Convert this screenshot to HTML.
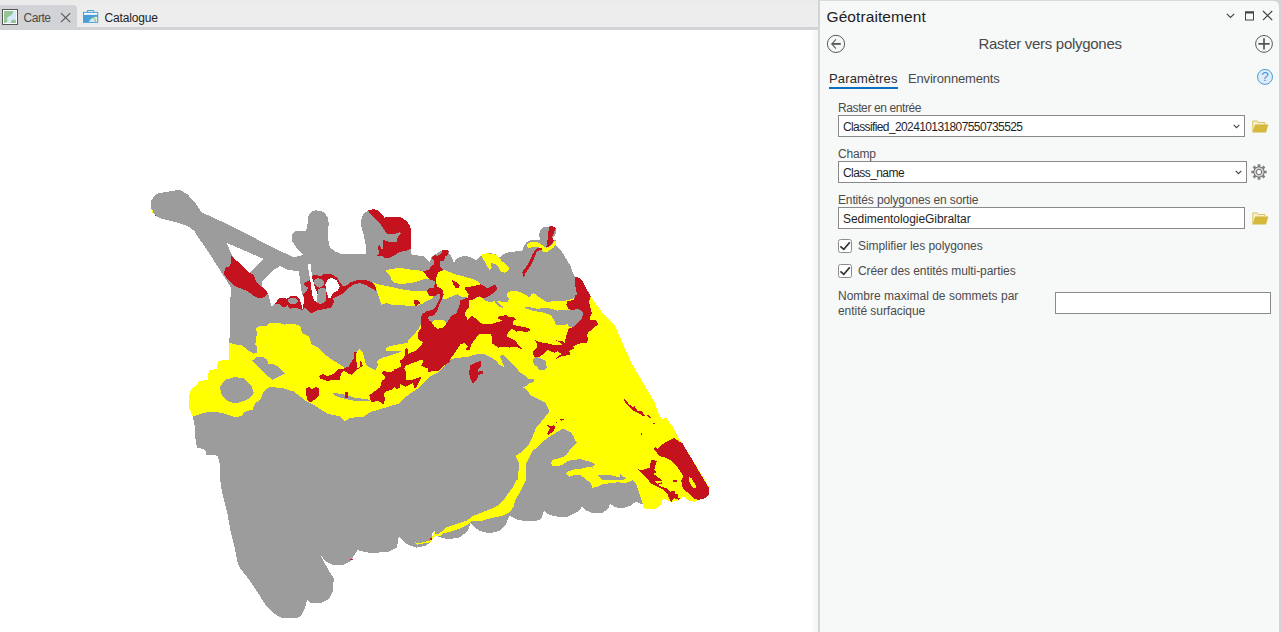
<!DOCTYPE html>
<html lang="fr">
<head>
<meta charset="utf-8">
<title>Géotraitement - Raster vers polygones</title>
<style>
*{box-sizing:border-box;margin:0;padding:0}
html,body{width:1281px;height:632px;overflow:hidden;background:#fff;font-family:"Liberation Sans",sans-serif;color:#2b2b2b}
#topbar{position:absolute;left:0;top:0;width:820px;height:27px;background:#ebebeb}
#topbar2{position:absolute;left:77px;top:5px;width:741px;height:22px;background:#ededed}
#topstrip{position:absolute;left:0;top:27px;width:818px;height:3px;background:#d2d3d7}
#tab1{position:absolute;left:0;top:5px;width:77px;height:23px;background:#d2d3d7;border-top-right-radius:4px}
.tabtxt{position:absolute;top:11px;font-size:12px;line-height:15px;white-space:nowrap}
#mapwrap{position:absolute;left:0;top:30px;width:818px;height:602px;background:#fff;overflow:hidden}
#shadow{position:absolute;left:810px;top:30px;width:8px;height:602px;background:linear-gradient(to right,rgba(244,244,244,0),rgba(244,244,244,1))}
#pborder{position:absolute;left:818px;top:0;width:2px;height:632px;background:#d3d4d8}
#pborder2{position:absolute;left:1279px;top:0;width:2px;height:632px;background:#d3d4d8}
#corner{z-index:5;position:absolute;left:1273px;top:0;width:8px;height:8px;background:#d3d4d8}
#corner i{position:absolute;left:0;top:1px;width:6px;height:7px;background:#f7f8f8;border-top-right-radius:5px}
#panel{position:absolute;left:820px;top:0;width:459px;height:632px;background:#f7f8f8;border-top:1px solid #d9dadd}
#panel .t{position:absolute;white-space:nowrap}
.inp{position:absolute;background:#fff;border:1px solid #8a8a8a;height:22px}
.inp span{position:absolute;left:4px;top:4px;font-size:12px;line-height:14px;color:#1f1f1f;white-space:nowrap}
.lbl{position:absolute;font-size:12px;line-height:15px;color:#4c4c4c;white-space:nowrap}
.cb{position:absolute;width:14px;height:14px;border:1px solid #8c8c8c;border-radius:2.5px;background:#fff}
svg.ic{position:absolute;overflow:visible}
</style>
</head>
<body>
<div id="topbar"></div>
<div id="topbar2"></div>
<div id="tab1"></div>
<div id="topstrip"></div>
<svg class="ic" style="left:2px;top:9px" width="16" height="16" viewBox="0 0 16 16">
<rect x="0.5" y="0.5" width="15" height="15" fill="#fff" stroke="#555" stroke-width="1"/>
<rect x="2" y="2" width="12" height="12" fill="#d6e9f6"/>
<path d="M2 2H11.5C11 4 10 5.5 8.5 6.5C7 7.5 5.5 8 5 9.5C4.8 10.5 5.8 11 5.5 12C5.2 13 4 13.5 3.5 14H2Z" fill="#97c495"/>
<path d="M8.8 14C8.8 12 10 10.6 11.6 10.6C12.8 10.6 13.6 11.4 14 12.2V14Z" fill="#97c495"/>
</svg>
<div class="tabtxt" id="tx_carte" style="left:23.5px;color:#4a4a4a;letter-spacing:-0.46px">Carte</div>
<svg class="ic" style="left:60px;top:12px" width="11" height="11" viewBox="0 0 11 11"><path d="M1 1.1L10.2 10.2M10.2 1.1L1 10.2" stroke="#555" stroke-width="1.1" fill="none"/></svg>
<svg class="ic" style="left:83px;top:10px" width="16" height="13" viewBox="0 0 16 13">
<path d="M4.4 2V0.5H10.6V2" fill="none" stroke="#4a9fd8" stroke-width="1"/>
<rect x="0" y="1.9" width="15.2" height="11" fill="#4a9fd8"/>
<rect x="1" y="2.9" width="13.2" height="1.9" fill="#fff"/>
<path d="M6 12H14.2V6.8C10 6.8 7.2 9 6 12Z" fill="#e2efda"/>
<path d="M6.6 12H13.3C13.2 9.8 12.4 8.2 11.2 7.3C9 8 7.4 9.8 6.6 12Z" fill="#a3cc93"/>
<path d="M6.2 12H12C11.8 10.2 11 8.8 10 8C8.2 8.8 7 10.2 6.2 12Z" fill="#cfe6f5"/>
</svg>
<div class="tabtxt" id="tx_cat" style="left:104.5px;color:#1f1f1f;letter-spacing:-0.15px">Catalogue</div>
<div id="mapwrap">
<svg id="map" width="818" height="602" viewBox="0 30 818 602" shape-rendering="crispEdges" style="position:absolute;left:0;top:0">
<!--MAP-->
<polygon fill="#9c9c9c" points="151.0,204.0 151.0,200.5 153.3,197.7 156.6,193.8 165.5,192.0 176.5,190.2 181.0,190.5 187.6,194.4 195.4,203.3 202.0,212.7 210.9,216.5 224.0,222.6 244.0,232.5 273.0,247.6 294.0,257.5 303.7,254.7 297.5,249.0 292.0,241.0 292.5,234.0 296.0,231.0 306.0,231.0 308.0,222.0 308.5,215.6 311.0,212.0 315.5,210.4 321.0,210.8 325.0,213.0 328.0,218.0 328.6,222.7 328.2,240.0 329.8,247.0 334.5,251.3 341.0,253.8 366.0,254.3 365.5,244.3 363.3,233.2 360.5,223.8 361.0,220.0 363.3,214.4 367.7,210.5 373.8,209.0 378.8,211.0 383.2,215.5 384.3,217.7 389.9,216.6 401.0,217.2 406.5,221.0 410.4,226.6 411.0,233.2 411.0,254.3 415.6,255.3 423.4,256.0 427.0,259.0 429.7,261.9 431.3,257.2 436.0,254.0 441.4,250.6 447.7,250.6 449.2,253.3 451.6,257.2 453.9,262.7 457.0,258.0 464.0,256.0 470.3,256.9 476.6,260.3 479.7,257.2 481.3,254.8 490.0,253.2 495.0,254.0 500.0,257.6 503.3,254.3 508.8,252.0 522.0,251.0 524.3,245.5 526.5,242.0 529.8,240.5 539.8,240.0 539.2,234.4 540.4,230.0 543.0,227.2 548.7,226.6 551.0,225.8 555.3,227.8 555.9,230.5 555.3,236.0 553.0,236.8 553.2,240.0 555.9,240.3 556.4,245.5 562.0,252.0 567.5,261.0 570.8,266.5 573.0,273.0 575.2,277.0 578.6,277.6 582.0,280.0 590.7,296.6 601.8,312.0 615.0,325.4 617.0,330.0 622.0,342.0 631.0,362.0 644.0,384.5 654.0,401.0 658.6,413.0 662.0,419.7 665.7,417.0 673.0,427.0 677.6,436.7 682.0,442.7 686.6,450.0 694.2,462.7 703.0,476.6 708.7,486.7 708.7,494.3 704.3,498.7 697.3,500.0 694.2,502.0 687.8,500.0 682.8,496.2 680.9,498.7 676.5,500.6 671.4,502.0 666.3,500.0 663.2,497.5 661.3,504.4 657.5,508.2 649.9,509.5 643.5,508.2 642.3,503.2 641.0,503.8 636.0,501.3 630.9,505.7 622.0,508.5 614.4,507.0 610.0,503.4 608.7,508.2 601.8,513.3 592.9,513.3 585.3,510.0 582.2,506.3 579.0,510.8 567.6,516.5 560.0,517.0 549.5,515.0 544.0,511.0 542.0,517.0 540.0,520.0 530.0,521.5 518.0,520.0 509.6,515.6 506.0,524.0 499.0,531.0 489.5,533.4 480.0,531.0 473.0,526.0 470.5,522.7 468.0,531.0 458.6,538.0 446.8,539.0 439.6,537.0 436.0,535.8 434.4,531.0 432.5,533.0 431.0,541.7 425.4,546.0 416.0,547.6 406.4,544.0 400.5,538.0 398.8,535.8 397.0,547.6 387.5,552.0 371.0,553.0 360.0,551.0 357.8,550.0 350.0,561.6 342.3,565.3 333.3,565.3 325.8,561.6 320.5,554.8 324.3,562.3 328.8,570.6 333.6,578.0 333.4,586.0 332.6,591.7 328.8,599.0 321.3,603.0 310.8,603.0 307.0,600.0 305.0,608.0 301.7,615.0 297.0,618.4 282.0,618.4 273.0,612.7 265.6,605.0 258.0,593.0 249.0,579.6 240.0,568.3 237.8,563.0 234.0,545.0 230.3,530.0 227.8,515.6 221.9,491.9 220.2,480.0 219.5,462.9 217.8,455.7 206.4,454.6 205.2,449.8 197.0,447.4 195.0,436.8 194.6,425.0 192.7,416.6 189.3,408.3 188.6,396.4 191.0,389.3 197.0,384.6 199.3,381.0 207.6,379.8 208.8,370.3 217.0,369.0 217.8,360.8 229.0,359.7 229.4,343.0 229.7,330.0 230.0,303.4 231.3,288.0 223.0,275.0 211.0,256.0 203.0,244.2 197.6,236.5 194.3,231.0 187.6,226.0 177.7,222.6 168.8,220.4 159.4,218.2 153.3,213.2 151.0,207.7"/>
<polygon fill="#ffffff" points="226.6,242.9 263.4,258.8 249.6,273.0 234.9,259.5 231.0,253.5"/>
<polygon fill="#ffffff" points="280.0,266.0 287.7,270.0 298.8,271.0 300.4,283.2 302.0,294.3 304.3,298.7 302.6,309.8 301.5,305.4 299.3,298.7 296.5,296.5 291.0,296.0 286.6,298.7 282.0,297.6 278.8,298.7 274.4,304.3 272.0,307.0 270.5,303.0 268.3,294.3 262.2,286.5 261.7,282.0 265.5,277.7 272.0,271.0"/>
<polygon fill="#ffff00" points="229.4,343.0 237.0,344.8 242.0,345.4 248.4,350.5 253.4,353.7 257.2,353.0 257.5,348.0 255.3,344.2 256.0,339.0 257.0,332.8 256.0,328.4 258.5,326.5 266.0,326.2 270.0,322.7 280.0,323.0 283.8,324.6 294.0,324.0 300.3,325.8 302.0,332.8 309.0,336.6 311.6,344.2 316.7,346.7 321.8,351.8 329.4,358.0 335.7,362.0 340.0,364.4 344.7,368.0 351.9,365.6 355.4,353.7 359.0,349.0 362.8,352.3 365.2,361.8 366.6,365.6 371.3,368.0 376.0,370.4 377.0,366.6 378.0,364.7 377.0,360.9 381.8,358.0 389.4,355.7 397.0,353.3 401.7,351.4 397.0,350.9 386.5,350.6 386.0,348.5 389.4,346.2 397.0,344.7 402.7,343.8 408.4,342.4 408.4,340.0 413.3,335.4 417.7,330.0 420.5,325.5 432.0,323.0 447.0,324.0 452.0,319.0 458.0,314.0 461.0,305.0 462.0,300.0 468.6,299.8 472.0,299.8 476.3,297.6 480.0,296.6 483.7,299.0 486.0,301.0 491.6,302.5 494.8,300.5 499.6,301.4 507.5,302.0 509.0,299.0 507.0,295.8 507.5,292.7 510.6,291.0 517.0,291.0 523.3,293.4 529.6,297.4 531.2,294.2 533.6,293.0 537.5,295.8 543.0,299.8 547.0,302.0 555.0,301.0 566.4,300.5 582.0,296.0 590.7,296.6 601.8,312.0 615.0,325.4 617.0,330.0 622.0,342.0 631.0,362.0 644.0,384.5 654.0,401.0 658.6,413.0 662.0,419.7 665.7,417.0 673.0,427.0 677.6,436.7 682.0,442.7 686.6,450.0 694.2,462.7 703.0,476.6 708.7,486.7 708.7,494.3 704.3,498.7 697.3,500.0 694.2,502.0 687.8,500.0 682.8,496.2 680.9,498.7 676.5,500.6 671.4,502.0 666.3,500.0 663.2,497.5 661.3,504.4 657.5,508.2 649.9,509.5 643.5,508.2 642.9,503.8 641.0,498.0 638.5,490.5 636.0,484.2 632.8,479.7 630.9,481.0 625.8,483.0 618.2,482.3 610.6,483.2 603.0,484.2 598.0,486.7 592.3,488.0 591.0,483.2 585.3,479.0 580.3,474.7 574.0,475.3 569.5,476.6 566.2,473.4 568.0,471.5 573.2,469.6 578.2,469.0 583.3,468.4 588.4,466.5 592.8,467.7 592.0,465.8 596.6,465.2 590.9,462.0 585.8,460.8 579.5,458.9 574.4,460.0 568.0,460.8 563.0,464.6 556.7,466.5 552.3,465.8 551.0,463.3 552.3,460.0 556.7,458.9 563.0,457.0 566.8,454.4 569.4,450.6 573.2,446.8 577.0,443.0 574.4,439.2 573.8,436.0 570.6,432.3 565.6,429.7 561.8,428.9 558.0,431.6 551.6,435.4 543.4,441.0 536.5,448.0 532.7,450.6 528.9,458.2 526.3,463.3 525.7,480.0 526.2,480.0 520.3,491.9 515.3,500.0 513.5,506.9 510.0,512.0 503.2,515.5 496.4,517.2 491.2,518.0 482.6,520.6 472.3,520.6 468.9,524.0 460.3,528.4 450.0,531.8 443.0,533.5 439.7,536.4 436.2,536.0 433.6,537.0 431.0,542.0 426.0,543.0 417.3,544.7 413.9,541.2 417.3,543.3 424.2,542.0 430.2,540.4 432.8,536.0 434.2,531.0 435.4,533.5 438.0,534.4 442.2,531.0 446.5,527.5 456.8,524.0 467.0,520.6 472.3,516.3 481.0,512.9 489.5,509.5 497.2,506.0 503.5,500.0 508.5,493.0 513.2,487.0 516.7,480.0 518.0,480.0 519.0,462.9 515.6,455.7 520.0,453.0 523.8,449.4 528.9,444.3 531.4,439.2 534.0,433.0 536.5,427.2 541.5,421.5 545.3,416.5 548.5,412.7 548.5,408.9 545.3,402.5 540.3,400.0 538.7,399.5 531.0,395.7 527.3,390.6 523.5,387.5 527.3,385.6 528.6,383.7 534.3,381.8 533.7,379.2 528.6,379.2 526.0,376.0 521.0,373.2 516.0,367.8 510.9,362.8 505.8,357.0 502.0,354.2 500.0,356.5 502.0,361.5 504.6,367.2 499.5,364.7 495.7,360.3 489.4,356.5 483.0,353.7 476.7,354.2 469.0,356.5 459.0,357.7 451.4,359.0 440.0,370.4 437.3,372.7 430.0,376.3 418.3,388.0 406.4,396.4 399.3,403.5 387.4,407.0 370.8,411.9 363.7,416.6 350.7,417.8 344.7,421.3 340.0,416.6 327.4,413.5 322.7,410.7 315.6,406.0 306.0,401.0 294.2,391.7 282.3,388.0 269.3,387.0 263.4,391.7 261.0,398.8 255.0,403.5 252.7,409.5 244.4,411.9 242.0,415.9 235.0,417.3 230.0,415.4 220.7,412.6 208.8,411.9 201.7,413.5 192.7,416.6 189.3,408.3 188.6,396.4 191.0,389.3 197.0,384.6 199.3,381.0 207.6,379.8 208.8,370.3 217.0,369.0 217.8,360.8 229.0,359.7"/>
<polygon fill="#ffff00" points="386.0,270.5 391.0,268.8 402.0,268.0 408.8,269.4 423.0,271.0 426.5,275.5 429.8,279.3 424.3,279.0 416.5,281.6 411.0,283.2 402.0,283.8 394.4,283.2 391.6,280.0 390.0,275.5 386.6,272.7"/>
<polygon fill="#ffff00" points="373.2,282.0 378.0,284.4 386.6,286.0 402.0,289.3 413.2,291.0 426.5,291.2 428.7,295.4 434.3,297.0 428.7,300.4 424.3,302.6 421.0,304.3 416.5,306.0 402.0,305.4 393.3,305.4 386.6,303.0 381.5,304.6 379.0,297.4 376.8,290.3"/>
<polygon fill="#ffff00" points="437.6,272.0 444.2,270.0 448.7,271.6 455.3,274.4 464.0,276.6 472.0,278.8 477.5,281.0 480.8,284.3 476.3,285.4 470.8,286.5 464.0,287.6 466.4,291.0 468.6,294.3 467.5,297.6 462.0,297.0 457.5,294.3 452.0,296.5 446.4,298.7 442.6,299.3 443.7,294.3 442.0,288.8 437.0,286.5 436.0,281.0 436.5,276.6"/>
<polygon fill="#ffff00" points="480.8,255.0 486.3,253.3 493.0,253.9 497.4,255.5 501.8,261.0 508.5,266.6 509.0,270.0 505.0,272.7 500.7,271.6 498.5,266.6 495.2,263.8 490.7,263.3 491.8,267.7 489.6,270.0 487.4,266.6 485.2,262.2 483.0,258.9"/>
<polygon fill="#ffff00" points="527.0,246.0 527.6,243.3 532.0,242.0 537.6,242.0 542.0,245.0 546.4,247.7 550.9,245.5 554.2,241.6 555.9,240.5 556.2,244.4 553.0,248.2 547.5,251.6 543.0,251.6 541.5,248.8 537.6,247.0 533.0,247.0 528.7,248.2"/>
<polygon fill="#ffff00" points="432.0,322.0 434.3,320.0 444.3,320.5 446.5,323.3 443.2,327.7 437.6,328.8 434.3,326.6"/>
<polygon fill="#9c9c9c" points="524.3,306.6 528.7,307.0 537.6,308.8 546.4,307.7 557.5,310.5 568.6,310.0 576.3,308.8 580.8,310.0 583.0,313.2 582.0,318.8 577.5,323.2 573.0,327.0 569.7,327.6 567.5,324.3 559.7,325.4 555.3,324.3 554.2,320.0 550.9,315.4 544.2,312.7 537.6,311.6 529.8,310.0 525.4,308.2"/>
<polygon fill="#9c9c9c" points="252.2,360.6 256.0,357.5 263.5,357.0 267.3,360.0 268.0,363.8 273.7,364.4 278.7,367.0 285.0,373.3 280.0,375.8 272.4,379.6 267.3,375.8 261.0,369.5 256.0,364.4"/>
<polygon fill="#9c9c9c" points="219.5,387.0 225.4,379.8 235.0,377.0 244.4,378.6 251.5,385.7 253.9,392.9 249.0,398.8 239.6,402.4 235.0,403.5 227.8,401.0 221.9,395.0"/>
<polygon fill="#9c9c9c" points="533.0,359.0 536.2,357.0 541.3,358.4 545.7,361.0 546.3,365.3 547.6,367.2 543.8,370.4 539.4,370.4 537.5,367.2 533.7,364.0"/>
<polygon fill="#9c9c9c" points="494.0,300.2 496.4,301.4 499.6,304.5 502.7,306.5 502.7,307.7 498.8,306.5 495.6,303.7"/>
<polygon fill="#9c9c9c" points="597.3,474.7 610.6,475.3 619.5,477.2 620.0,474.0 625.8,478.5 623.3,479.7 615.7,479.7 601.8,479.7"/>
<polygon fill="#9c9c9c" points="333.0,393.3 340.0,393.6 347.0,395.2 354.2,397.6 368.5,399.5 369.7,400.7 354.2,400.7 344.7,398.8 340.0,397.6 335.0,396.0"/>
<polygon fill="#c5121f" points="231.3,256.0 234.9,259.5 239.6,263.0 249.6,273.0 253.9,275.0 256.0,282.0 265.7,290.0 268.0,294.0 262.0,298.6 256.0,297.4 248.0,291.5 239.6,288.0 233.7,285.6 227.8,279.6 223.5,273.7 225.4,267.8 230.0,265.9 231.3,260.7"/>
<polygon fill="#c5121f" points="274.4,304.3 278.8,298.7 282.1,297.4 286.6,298.7 291.0,296.0 296.5,296.3 299.3,298.7 301.5,305.4 302.6,309.8 304.3,298.7 303.2,294.3 306.5,291.0 308.7,287.7 304.3,285.4 304.3,282.7 308.7,281.0 310.9,278.8 312.0,276.0 315.4,274.6 317.6,275.5 320.9,276.6 324.2,273.5 332.0,274.4 337.5,278.2 339.7,282.1 343.1,286.5 346.4,285.4 350.8,282.1 357.5,280.1 365.2,280.1 370.7,281.6 375.2,285.4 376.3,291.5 373.0,288.8 366.3,285.4 359.7,283.2 354.1,284.6 348.6,287.7 341.9,294.3 333.1,298.7 334.2,302.0 330.9,307.6 317.6,310.4 310.9,313.7 307.6,309.8 304.3,307.6 302.6,310.4 296.5,307.6 289.9,308.7 287.7,305.4 283.8,307.6 279.9,304.3"/>
<polygon fill="#c5121f" points="367.7,210.5 373.8,209.0 378.8,211.0 383.2,215.5 384.3,217.7 389.9,216.6 401.0,217.2 406.5,221.0 410.4,226.6 411.0,233.2 411.0,248.7 407.6,250.4 402.0,251.5 397.6,253.2 394.3,255.4 388.8,258.0 384.3,258.0 382.0,255.4 377.0,256.5 379.3,252.0 377.7,248.7 377.7,246.5 380.0,244.3 381.0,248.7 383.2,249.3 383.2,240.0 386.5,241.0 388.8,242.0 396.5,242.0 397.6,237.7 401.0,233.2 399.8,232.0 394.3,234.3 387.7,234.3 384.3,230.0 378.8,222.0 372.0,215.5"/>
<polygon fill="#c5121f" points="441.5,250.5 446.4,250.0 448.7,251.0 448.0,254.4 445.3,256.6 444.2,260.5 440.4,261.0 439.8,266.6 443.0,270.0 438.7,272.0 436.5,276.6 436.0,281.0 437.0,286.5 442.0,288.8 443.7,294.3 442.0,298.7 439.8,303.0 437.6,309.8 434.3,315.3 428.7,316.4 424.3,320.0 420.4,320.0 422.0,314.2 426.5,311.5 433.0,309.8 436.5,305.4 439.8,298.7 440.4,294.3 437.0,294.3 435.4,296.5 429.3,296.0 427.0,291.0 428.7,288.2 434.3,287.6 434.8,281.0 429.8,279.3 426.5,275.5 423.0,271.0 428.7,270.0 431.0,266.0 434.3,264.4 433.7,260.5 431.5,257.8 434.3,255.0 437.6,256.0 441.5,253.3"/>
<polygon fill="#c5121f" points="414.3,300.4 418.2,300.4 421.0,303.0 417.6,304.8 416.0,306.5 414.5,304.3"/>
<polygon fill="#c5121f" points="452.0,280.0 456.4,282.0 459.7,285.4 459.2,288.2 455.3,287.6 453.0,284.3"/>
<polygon fill="#c5121f" points="464.0,287.6 470.8,286.5 476.3,285.4 480.8,284.3 485.0,286.5 487.4,288.2 490.7,286.5 496.3,284.3 496.8,290.0 493.0,293.2 488.5,296.5 484.0,298.7 479.7,296.0 476.3,297.6 472.0,299.8 468.6,299.8 468.6,307.6 465.3,312.0 464.0,320.0 449.2,320.0 450.9,316.4 456.4,313.0 458.6,307.6 460.8,302.0 464.0,298.7 467.5,297.6 468.6,294.3 466.4,291.0"/>
<polygon fill="#c5121f" points="549.8,226.0 553.0,226.4 555.9,228.3 554.2,232.2 552.0,236.6 553.6,240.5 552.0,243.8 547.5,247.5 546.4,246.6 547.5,240.0 548.0,233.3"/>
<polygon fill="#c5121f" points="537.6,247.7 542.0,248.2 542.6,250.5 539.8,250.0 536.5,252.0 534.3,257.6 532.0,263.2 528.7,268.7 524.8,274.3 524.3,277.0 523.0,276.5 522.3,272.0 526.5,266.5 529.8,261.0 532.0,255.4 534.3,251.0"/>
<polygon fill="#c5121f" points="575.2,277.0 578.6,277.6 582.0,280.0 590.7,296.6 589.0,302.0 590.7,308.8 591.8,313.2 589.6,317.6 590.7,320.4 596.3,320.0 598.0,324.3 593.0,328.7 588.5,332.0 586.9,335.4 588.5,339.8 586.3,343.0 579.7,343.0 572.0,345.3 568.6,346.4 564.2,344.2 566.4,335.4 568.6,328.7 573.0,327.0 577.5,323.2 582.0,318.8 583.0,313.2 580.8,310.0 576.3,308.8 573.0,310.5 568.6,308.8 566.4,304.4 567.0,301.0 574.0,300.0 575.2,295.5 577.5,294.4 576.3,291.0 575.2,285.5 575.2,282.2"/>
<polygon fill="#c5121f" points="535.4,340.4 539.8,342.0 548.7,343.7 555.3,345.3 562.0,344.8 559.7,342.0 555.3,340.4 563.0,341.0 564.2,344.2 568.6,346.4 572.0,345.3 579.7,343.0 586.3,343.0 588.0,342.5 578.0,343.8 573.0,346.3 574.2,348.2 569.0,350.8 570.4,354.6 561.5,356.5 554.6,359.6 557.7,356.5 561.5,354.0 557.7,351.4 554.0,352.7 547.6,350.0 543.8,354.0 538.7,357.0 533.7,356.5 533.0,351.4 536.2,348.9 537.5,345.0"/>
<polygon fill="#c5121f" points="420.5,318.3 423.3,313.8 427.7,316.6 428.8,320.0 432.0,322.7 434.3,326.6 437.6,328.8 443.2,327.7 446.5,323.3 448.7,319.4 453.0,315.5 457.6,312.2 459.8,304.4 460.4,300.0 468.7,300.0 468.0,306.6 465.3,311.0 463.7,314.4 466.4,316.6 467.0,320.5 472.0,315.5 477.5,320.0 482.0,323.8 490.8,324.4 497.5,322.0 503.0,321.0 497.5,318.3 497.5,316.6 504.0,316.0 504.7,314.4 508.5,316.6 515.0,317.7 515.7,320.0 513.0,321.0 513.5,325.0 521.8,326.6 527.4,327.7 530.7,330.0 526.2,332.7 521.8,331.0 516.3,331.6 511.8,328.8 508.5,332.0 506.3,336.0 510.7,338.2 516.3,341.0 517.4,344.3 522.4,348.2 521.8,349.3 516.3,346.5 509.6,347.6 504.0,347.0 498.6,347.6 492.0,343.2 492.5,337.6 490.8,334.3 479.7,334.3 476.4,337.6 472.0,343.2 469.2,350.4 465.3,350.4 467.5,346.5 464.2,343.2 460.4,344.3 455.4,352.0 451.0,358.0 449.2,362.3 445.4,364.7 442.6,366.6 438.8,370.9 431.2,371.3 427.8,372.8 428.3,368.5 425.5,367.5 421.2,365.6 422.6,363.3 423.0,360.4 420.7,360.0 415.0,362.3 406.5,365.2 404.0,368.5 405.5,371.3 405.5,376.0 406.5,380.4 411.2,380.0 417.0,378.0 421.7,376.6 418.8,382.7 416.0,387.5 414.0,387.5 413.0,383.2 410.3,384.6 405.5,387.0 402.7,385.6 399.8,383.7 399.8,387.5 397.0,389.4 395.0,387.0 392.2,389.4 385.6,391.8 383.9,394.0 385.0,398.8 383.9,404.7 378.0,400.7 372.0,402.4 369.7,398.8 369.4,395.0 372.3,393.2 376.0,390.3 379.9,387.5 380.8,384.6 381.8,380.8 384.6,379.0 384.6,376.6 381.3,372.8 383.7,371.3 389.4,371.8 394.6,371.3 394.0,368.5 397.0,368.5 400.8,366.6 400.3,360.4 403.2,358.5 405.5,354.2 404.6,350.4 406.5,348.0 407.9,349.5 408.4,353.8 416.0,350.4 420.7,345.7 423.6,342.0 420.5,341.0 417.7,337.6 417.7,333.2 420.5,328.8 421.0,323.3"/>
<polygon fill="#c5121f" points="470.4,365.3 476.7,362.0 481.0,361.0 481.0,367.2 478.0,369.0 478.0,371.6 483.0,371.0 483.0,373.5 478.0,375.4 477.3,379.2 473.0,383.7 471.0,380.5 469.0,373.0"/>
<polygon fill="#c5121f" points="653.4,449.0 655.3,447.0 657.2,449.0 660.4,445.8 666.0,442.0 668.0,440.8 672.4,438.6 675.0,438.2 678.0,440.8 682.5,443.3 685.7,449.0 690.8,457.2 697.0,468.0 702.2,476.8 706.0,483.2 708.7,487.6 708.7,494.6 704.7,498.4 698.4,499.9 694.6,499.0 690.8,495.2 687.0,492.0 683.8,489.5 681.9,485.7 681.3,480.6 683.2,476.2 680.6,471.8 678.0,468.0 674.3,464.2 670.5,460.4 666.7,458.0 661.6,456.6 658.5,455.3 656.6,452.2"/>
<polygon fill="#ffff00" points="689.0,477.2 691.6,478.5 696.0,486.0 695.4,488.6 693.0,488.0 689.7,483.0 688.5,479.0"/>
<polygon fill="#c5121f" points="637.8,469.0 641.0,470.3 646.0,469.0 649.9,467.7 651.0,460.0 653.7,459.5 656.8,461.4 655.0,466.5 654.3,470.3 656.8,472.0 653.7,474.0 658.7,477.8 662.5,480.4 661.3,484.2 657.5,484.8 661.3,486.7 666.3,488.0 670.0,491.8 674.0,490.5 675.2,493.7 678.4,494.3 677.7,497.5 680.9,498.0 679.0,500.0 674.0,498.0 671.4,502.0 668.9,498.0 667.6,493.7 662.5,489.2 656.2,486.0 651.0,483.5 647.3,479.0 643.5,475.3 641.0,472.0"/>
<polygon fill="#c5121f" points="672.7,480.4 676.5,480.4 676.5,482.3 672.7,482.3"/>
<polygon fill="#ffff00" points="655.3,481.3 661.6,480.6 662.3,482.2 657.2,483.8"/>
<polygon fill="#c5121f" points="672.0,490.5 674.6,490.5 674.6,492.4 672.0,492.4"/>
<polygon fill="#c5121f" points="623.0,398.3 626.3,400.6 628.9,404.4 632.7,407.0 634.6,406.3 637.7,410.8 642.0,411.4 644.7,415.8 643.4,416.5 639.0,413.3 635.2,412.0 631.4,408.9 627.6,405.0 625.0,402.0"/>
<polygon fill="#c5121f" points="646.6,414.6 648.0,414.6 651.0,417.7 649.5,417.7"/>
<polygon fill="#c5121f" points="652.3,422.0 654.8,423.4 653.5,424.0"/>
<polygon fill="#c5121f" points="640.3,433.0 641.5,433.0 642.8,435.4 641.5,435.4"/>
<polygon fill="#c5121f" points="546.0,424.7 549.0,425.3 551.0,426.6 554.2,424.7 555.2,428.5 553.0,431.6 548.5,434.8 547.2,433.5 549.7,428.5"/>
<polygon fill="#c5121f" points="555.4,423.4 556.5,421.5 557.2,423.0"/>
<polygon fill="#c5121f" points="560.2,419.6 563.5,418.6 564.5,420.2 561.0,420.6"/>
<polygon fill="#c5121f" points="306.0,388.0 309.6,387.0 312.0,389.3 315.6,387.0 319.0,388.0 319.0,395.2 315.6,398.8 310.8,402.4 307.3,400.0 306.0,394.0"/>
<polygon fill="#c5121f" points="319.0,376.3 322.7,374.0 327.4,376.3 333.4,374.0 338.0,369.0 340.0,368.5 343.8,368.5 348.5,366.6 351.4,361.8 353.8,358.5 354.2,352.2 356.6,351.9 356.0,359.0 357.0,364.7 357.6,368.5 360.0,366.6 360.4,361.4 361.4,361.8 362.8,365.6 360.4,367.5 357.6,369.4 353.3,372.8 352.3,374.7 349.0,374.2 344.3,370.9 342.0,372.3 340.0,377.0 340.0,379.8 333.4,379.8 327.4,381.0 320.3,378.6"/>
<polygon fill="#c5121f" points="344.7,391.7 348.3,391.7 348.3,397.6 345.5,397.6"/>
<polygon fill="#ffff00" points="151.2,209.0 152.3,209.0 153.8,213.4 152.5,213.0"/>
<polygon fill="#c5121f" points="154.8,214.6 156.2,214.6 156.2,216.0 154.8,216.0"/>
<polygon fill="#c5121f" points="350.0,558.5 352.5,558.5 352.5,559.6 350.0,559.6"/>
<polygon fill="#c5121f" points="430.0,537.5 432.0,537.5 432.0,539.5 430.0,539.5"/>
<polygon fill="#9c9c9c" points="288.2,299.3 292.1,297.6 296.5,298.7 298.2,301.5 295.4,304.0 291.0,304.3 288.2,302.0"/>
<polygon fill="#9c9c9c" points="314.3,279.9 317.6,278.2 322.0,279.0 324.2,282.1 323.1,286.0 319.8,287.7 315.9,286.0 314.3,283.2"/>
<polygon fill="#9c9c9c" points="317.6,288.8 325.3,287.7 326.4,294.3 325.3,302.0 319.8,304.3 316.5,302.0 317.6,294.3"/>
<polygon fill="#ffffff" points="330.9,277.7 336.4,279.9 339.7,286.5 337.5,291.0 333.1,293.2 330.9,297.6 328.7,298.7 326.4,292.1 325.3,284.3 327.6,279.9"/>
<polygon fill="#ffffff" points="307.8,264.2 310.7,264.2 312.0,276.6 314.3,285.4 317.6,294.3 316.5,302.0 314.3,300.9 312.0,294.3 310.4,281.0 308.7,271.0"/>
<!--/MAP-->
</svg>
</div>
<div id="shadow"></div>
<div id="pborder"></div>
<div id="pborder2"></div>
<div id="corner"><i></i></div>
<div id="panel">
<div class="t" id="tx_geo" style="left:6.5px;top:7px;font-size:15.5px;line-height:18px;color:#222;letter-spacing:0.09px">Géotraitement</div>
<svg class="ic" style="left:406px;top:12px" width="9" height="6" viewBox="0 0 9 6"><path d="M0.8 0.9L4.5 4.4L8.2 0.9" fill="none" stroke="#444" stroke-width="1.2"/></svg>
<svg class="ic" style="left:425px;top:9.5px" width="9" height="10" viewBox="0 0 9 10"><rect x="0.5" y="1" width="8" height="8" fill="none" stroke="#444" stroke-width="1"/><rect x="0" y="0.5" width="9" height="2" fill="#444"/></svg>
<svg class="ic" style="left:442px;top:9px" width="11" height="11" viewBox="0 0 11 11"><path d="M1 1L10.2 10.1M10.2 1L1 10.1" stroke="#444" stroke-width="1.2" fill="none"/></svg>
<svg class="ic" style="left:6px;top:33px" width="20" height="20" viewBox="0 0 20 20"><circle cx="10" cy="9.9" r="8.6" fill="none" stroke="#5a5a5a" stroke-width="1"/><path d="M5.8 9.9H14.8" stroke="#5a5a5a" stroke-width="1.9" fill="none"/><path d="M10 5.3L5.8 9.9L10 14.6" stroke="#5a5a5a" stroke-width="1.1" fill="none"/></svg>
<div class="t" id="tx_rvp" style="left:158.5px;top:34px;font-size:15px;line-height:18px;color:#4a4a4a;letter-spacing:-0.29px">Raster vers polygones</div>
<svg class="ic" style="left:434px;top:33px" width="20" height="20" viewBox="0 0 20 20"><circle cx="10" cy="9.9" r="8.4" fill="none" stroke="#5a5a5a" stroke-width="1"/><path d="M4.4 9.9H15.6M10 4.3V15.5" stroke="#555" stroke-width="1.7" fill="none"/></svg>
<div class="t" id="tx_par" style="left:9px;top:70px;font-size:13px;line-height:15px;color:#2a2a2a;letter-spacing:0.14px">Paramètres</div>
<div class="t" id="tx_env" style="left:88px;top:70px;font-size:13px;line-height:15px;color:#4a4a4a;letter-spacing:-0.17px">Environnements</div>
<div style="position:absolute;left:9px;top:86px;width:69px;height:2px;background:#0b6fc2"></div>
<svg class="ic" style="left:436px;top:67px" width="18" height="18" viewBox="0 0 18 18"><circle cx="9" cy="8.9" r="7.5" fill="#deecf8" stroke="#4a9fd8" stroke-width="1"/><text x="9" y="13.4" font-size="13.5" font-family="Liberation Sans, sans-serif" fill="#3f97d6" text-anchor="middle">?</text></svg>

<div class="lbl" id="tx_l1" style="left:18px;top:100px;letter-spacing:-0.39px">Raster en entrée</div>
<div class="inp" style="left:18px;top:114px;width:407px"><span id="tx_i1" style="letter-spacing:-0.61px">Classified_202410131807550735525</span></div>
<svg class="ic" style="left:413px;top:123px" width="7" height="5" viewBox="0 0 7 5"><path d="M0.7 0.8L3.5 3.6L6.3 0.8" fill="none" stroke="#444" stroke-width="1.1"/></svg>
<svg class="ic fold" style="left:432px;top:119px" width="17" height="13" viewBox="0 0 17 13"><path d="M0.3 12.2V1.6Q0.3 0.6 1.3 0.6H5.2L6.6 2H12.6Q13.4 2 13.4 2.8V4.6H3.4L0.3 12.2Z" fill="#dcc558"/><path d="M1.3 10.6V2.2Q1.3 1.6 1.9 1.6H5L6.2 3H12.4V4.6H3.4Z" fill="#f8f1cf"/><path d="M0.3 12.4L3.2 4.6H16.4L14 12.4Z" fill="#d4b93c"/></svg>

<div class="lbl" id="tx_l2" style="left:18px;top:146px;letter-spacing:-0.17px">Champ</div>
<div class="inp" style="left:18px;top:160px;width:409px"><span id="tx_i2" style="letter-spacing:-0.57px">Class_name</span></div>
<svg class="ic" style="left:415px;top:169px" width="7" height="5" viewBox="0 0 7 5"><path d="M0.7 0.8L3.5 3.6L6.3 0.8" fill="none" stroke="#444" stroke-width="1.1"/></svg>
<svg class="ic" style="left:431px;top:163px" width="16" height="16" viewBox="-8 -8 16 16">
<g stroke="#808080" stroke-width="2.7" fill="none"><path d="M0 -7.7V-4.5M0 7.7V4.5M-7.7 0H-4.5M7.7 0H4.5M-5.45 -5.45L-3.2 -3.2M5.45 5.45L3.2 3.2M-5.45 5.45L-3.2 3.2M5.45 -5.45L3.2 -3.2"/></g>
<circle r="5.2" fill="#d2d2d2" stroke="#747474" stroke-width="1"/><circle r="2.7" fill="#f7f8f8" stroke="#747474" stroke-width="1"/></svg>

<div class="lbl" id="tx_l3" style="left:18px;top:192px;letter-spacing:-0.14px">Entités polygones en sortie</div>
<div class="inp" style="left:18px;top:206px;width:407px"><span id="tx_i3" style="letter-spacing:-0.05px">SedimentologieGibraltar</span></div>
<svg class="ic fold" style="left:432px;top:211px" width="17" height="13" viewBox="0 0 17 13"><path d="M0.3 12.2V1.6Q0.3 0.6 1.3 0.6H5.2L6.6 2H12.6Q13.4 2 13.4 2.8V4.6H3.4L0.3 12.2Z" fill="#dcc558"/><path d="M1.3 10.6V2.2Q1.3 1.6 1.9 1.6H5L6.2 3H12.4V4.6H3.4Z" fill="#f8f1cf"/><path d="M0.3 12.4L3.2 4.6H16.4L14 12.4Z" fill="#d4b93c"/></svg>

<div class="cb" style="left:18px;top:238px"></div>
<svg class="ic" style="left:18px;top:238px" width="14" height="14" viewBox="0 0 14 14"><path d="M2.4 7.4L5.8 10.4L11.8 3.2" fill="none" stroke="#333" stroke-width="1.7"/></svg>
<div class="lbl" id="tx_c1" style="left:38px;top:238px;letter-spacing:-0.06px">Simplifier les polygones</div>
<div class="cb" style="left:18px;top:263px"></div>
<svg class="ic" style="left:18px;top:263px" width="14" height="14" viewBox="0 0 14 14"><path d="M2.4 7.4L5.8 10.4L11.8 3.2" fill="none" stroke="#333" stroke-width="1.7"/></svg>
<div class="lbl" id="tx_c2" style="left:38px;top:263px;letter-spacing:-0.08px">Créer des entités multi-parties</div>
<div class="lbl" id="tx_n1" style="left:18px;top:288px;letter-spacing:0.01px">Nombre maximal de sommets par</div>
<div class="lbl" id="tx_n2" style="left:18px;top:303px;letter-spacing:-0.05px">entité surfacique</div>
<div class="inp" style="left:235px;top:291px;width:216px"></div>
</div>
</body>
</html>
